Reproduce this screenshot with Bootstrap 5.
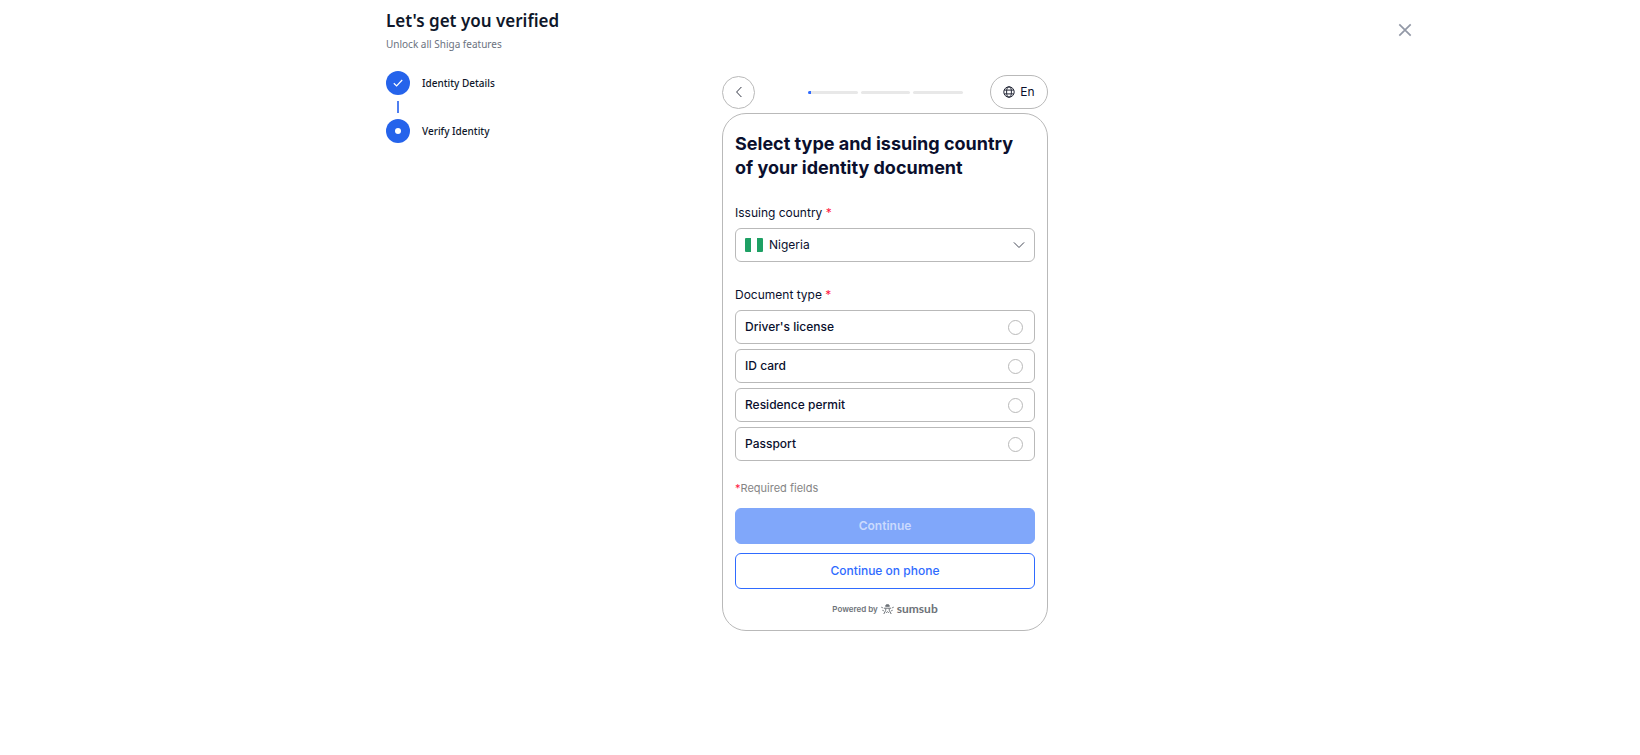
<!DOCTYPE html>
<html lang="en">
<head>
<meta charset="utf-8">
<meta name="viewport" content="width=device-width, initial-scale=1">
<title>Let's get you verified</title>
<link href="https://cdn.jsdelivr.net/npm/bootstrap@5.3.0/dist/css/bootstrap.min.css" rel="stylesheet">
<style>
  body { font-family: Inter, "Liberation Sans", sans-serif; font-size: 12px; line-height: 16px; color: #0a0f2d; background: #fff; }
  .verify-grid { display: grid; grid-template-columns: 386fr 336fr 326px 365fr 227fr; }
  .intro { grid-column: 2; font-family: "Noto Sans", sans-serif; color: #0f172a; }
  .intro h1 { font-size: 17px; line-height: 24px; font-weight: 600; margin: 9px 0 3px; white-space: nowrap; }
  .intro p { font-size: 10px; line-height: 16px; color: #6b7280; margin: 0 0 19px; }
  .step-text { font-size: 10px; font-weight: 500; }
  .step-dot { width: 24px; height: 24px; background: #2563eb; }
  .step-line { width: 2px; height: 12px; margin: 6px 11px; background: #4f7ff0; }
  .panel-col { grid-column: 3; padding-top: 75px; }
  .close-col { grid-column: 4; padding-top: 22px; }
  .pill { border: 1px solid #b9b9b9; background: #fff; color: #0a0f2d; }
  .back-btn { width: 33px; height: 33px; }
  .lang-btn { width: 58px; height: 34px; font-size: 12px; gap: 5px; }
  .seg-row { width: 155px; gap: 3px; margin-left: 26px; }
  .seg { flex: 1 1 0; height: 3px; background: #e8e8e8; border-radius: 2px; }
  .seg-fill { width: 3px; height: 3px; background: #2f6bff; }
  .doc-panel { border: 1px solid #b9b9b9; border-radius: 24px; margin-top: 4px; padding: 18px 12px 13px; }
  .doc-panel h2 { font-size: 18px; line-height: 24px; font-weight: 700; margin: 0 0 25px; white-space: nowrap; }
  .field-label { display: block; font-size: 12px; line-height: 16px; margin-bottom: 7px; float: none; }
  .req { color: #ff1744; }
  .field-box { height: 34px; border: 1px solid #b9b9b9; border-radius: 6px; padding: 0 9px; font-size: 12px; }
  .field-box select { appearance: none; border: 0; background: transparent; color: inherit; padding: 0 6px; outline: 0; }
  .doc-types { margin-top: 25px; }
  .options { gap: 5px; }
  .options label { font-weight: 500; }
  .options .form-check-input { width: 15px; height: 15px; margin: 0 2px 0 0; border-color: #b9b9b9; float: none; }
  .required-note { font-size: 11px; line-height: 16px; color: #858585; margin: 19px 0 12px; }
  .action { height: 36px; font-size: 12px; line-height: 16px; border-radius: 6px; padding: 0; }
  .action-main, .action-main:disabled { background: #80a7fa; border-color: #80a7fa; color: #cbdafd; font-weight: 600; opacity: 1; margin-bottom: 9px; }
  .action-alt { border-color: #2f6bff; color: #2f6bff; background: #fff; font-weight: 500; }
  .brand-line { margin-top: 12px; line-height: 16px; color: #6d7278; font-size: 8px; font-weight: 600; gap: 3px; }
  .brand-name { font-family: Lato, sans-serif; font-size: 12px; font-weight: 700; }
</style>
</head>
<body>
<main class="verify-grid">
  <section class="intro">
    <h1>Let's get you verified</h1>
    <p>Unlock all Shiga features</p>
    <div class="d-flex align-items-center">
      <span class="step-dot rounded-circle d-flex align-items-center justify-content-center">
        <svg width="12" height="12" viewBox="0 0 12 12" fill="none" stroke="#fff" stroke-width="1.2"><path d="M1.8 6.3 4.6 9 10.2 3"/></svg>
      </span>
      <span class="step-text ms-2 ps-1">Identity Details</span>
    </div>
    <div class="step-line"></div>
    <div class="d-flex align-items-center">
      <span class="step-dot rounded-circle d-flex align-items-center justify-content-center">
        <svg width="6" height="6" viewBox="0 0 6 6"><circle cx="3" cy="3" r="3" fill="#fff"/></svg>
      </span>
      <span class="step-text ms-2 ps-1">Verify Identity</span>
    </div>
  </section>

  <section class="panel-col">
    <div class="d-flex align-items-center justify-content-between">
      <button type="button" class="pill back-btn rounded-circle p-0 d-flex align-items-center justify-content-center" aria-label="Back">
        <svg width="12" height="12" viewBox="0 0 12 12" fill="none" stroke="#333745" stroke-width="1"><path d="M8.4 1 3.6 6l4.8 5"/></svg>
      </button>
      <div class="seg-row d-flex">
        <div class="seg overflow-hidden"><div class="seg-fill"></div></div>
        <div class="seg"></div>
        <div class="seg"></div>
      </div>
      <button type="button" class="pill lang-btn rounded-pill p-0 d-flex align-items-center justify-content-center">
        <svg width="12" height="12" viewBox="0 0 12 12" fill="none" stroke="#252938" stroke-width="1"><circle cx="6" cy="6" r="5.2"/><ellipse cx="6" cy="6" rx="2.4" ry="5.2"/><path d="M1.2 4.1h9.6M1.2 7.9h9.6"/></svg>
        En
      </button>
    </div>

    <form class="doc-panel">
      <h2>Select type and issuing country<br>of your identity document</h2>

      <label class="field-label" for="country">Issuing country <span class="req">*</span></label>
      <div class="field-box d-flex align-items-center">
        <svg width="18" height="14" viewBox="0 0 18 14"><path fill="#1ea064" d="M1 0h5v14H1a1 1 0 0 1-1-1V1a1 1 0 0 1 1-1zM12 0h5a1 1 0 0 1 1 1v12a1 1 0 0 1-1 1h-5z"/></svg>
        <select id="country" class="flex-grow-1"><option>Nigeria</option></select>
        <svg width="12" height="12" viewBox="0 0 12 12" fill="none" stroke="#444956" stroke-width="1"><path d="m.9 3.4 5.1 5.1 5.1-5.1"/></svg>
      </div>

      <fieldset class="doc-types">
        <legend class="field-label">Document type <span class="req">*</span></legend>
        <div class="options d-flex flex-column">
          <label class="field-box d-flex align-items-center justify-content-between">Driver's license<input class="form-check-input" type="radio" name="doc"></label>
          <label class="field-box d-flex align-items-center justify-content-between">ID card<input class="form-check-input" type="radio" name="doc"></label>
          <label class="field-box d-flex align-items-center justify-content-between">Residence permit<input class="form-check-input" type="radio" name="doc"></label>
          <label class="field-box d-flex align-items-center justify-content-between">Passport<input class="form-check-input" type="radio" name="doc"></label>
        </div>
      </fieldset>

      <p class="required-note"><span class="req">*</span>Required fields</p>
      <button type="button" class="btn action action-main w-100" disabled>Continue</button>
      <button type="button" class="btn action action-alt w-100">Continue on phone</button>

      <div class="brand-line d-flex align-items-center justify-content-center">
        <span>Powered by</span>
        <svg width="13" height="11" viewBox="0 0 13 11" fill="none" stroke="#6d7278" stroke-width="1"><path d="M4.6 2.3 5.3.8h2.4l.7 1.5z" fill="#6d7278"/><path d="M.3 3.2l1.5.6M12.7 3.2l-1.5.6M2.8 4.2h7.4M4.9 4.4 4.6 6.6 2.8 10M8.1 4.4l.3 2.2 1.8 3.4M5.2 8.7l1.3-1 1.3 1M1.4 6.3l1.4.5M11.6 6.3l-1.4.5"/></svg>
        <span class="brand-name">sumsub</span>
      </div>
    </form>
  </section>

  <div class="close-col text-end">
    <button type="button" class="border-0 bg-transparent p-0 d-inline-flex" aria-label="Close">
      <svg width="16" height="16" viewBox="0 0 16 16" fill="none" stroke="#9298a6" stroke-width="1.7"><path d="m2.3 2.3 11.4 11.4M13.7 2.3 2.3 13.7"/></svg>
    </button>
  </div>
</main>
<script src="https://cdn.jsdelivr.net/npm/bootstrap@5.3.0/dist/js/bootstrap.bundle.min.js"></script>
</body>
</html>
